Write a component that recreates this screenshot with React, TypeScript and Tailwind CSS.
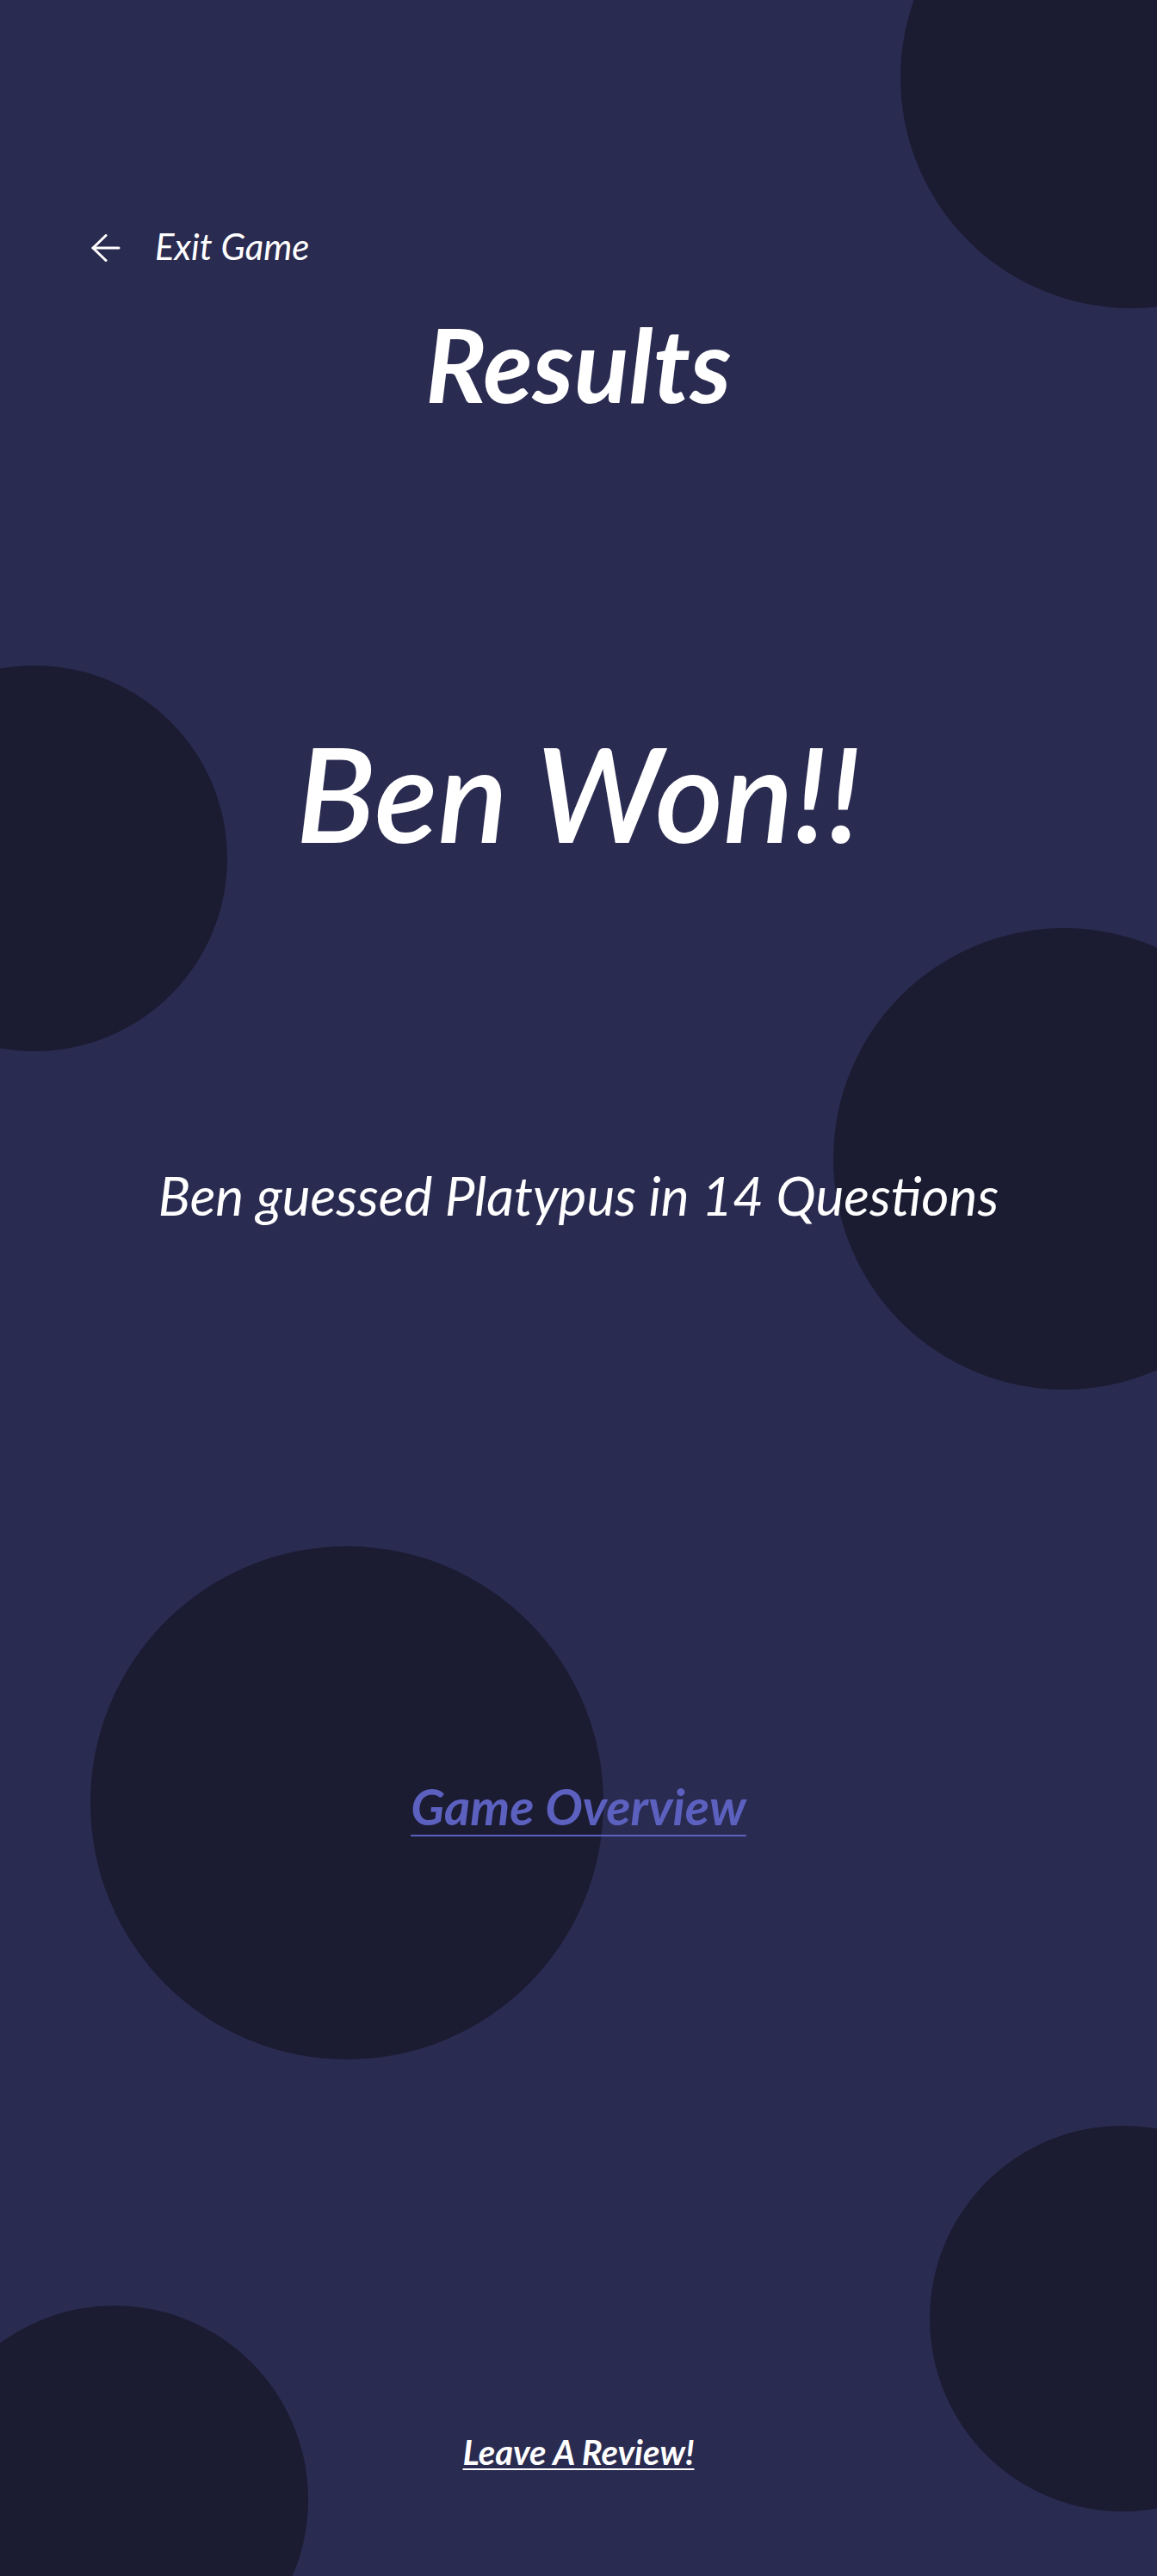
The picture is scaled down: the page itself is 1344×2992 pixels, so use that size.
import React from "react";

// decorative background blobs: [left, top, size]
const BLOBS = [
  "left-[1046px] top-[-178px] w-[536px] h-[536px]",
  "left-[-184px] top-[773px] w-[448px] h-[448px]",
  "left-[968px] top-[1078px] w-[536px] h-[536px]",
  "left-[105px] top-[1796px] w-[596px] h-[596px]",
  "left-[1080px] top-[2469px] w-[448px] h-[448px]",
  "left-[-92px] top-[2678px] w-[450px] h-[450px]",
];

function BackArrow() {
  return (
    <svg width="34" height="32" viewBox="0 0 34 32" fill="none" stroke="white" strokeWidth="3" strokeLinecap="round" strokeLinejoin="round">
      <path d="M32 16H2" />
      <path d="M17 1.5L2 16l15 14.5" />
    </svg>
  );
}

export default function App() {
  return (
    <div className="relative min-h-[2992px] w-full overflow-hidden bg-[#2a2b50] font-['Lato','Open_Sans',sans-serif] italic text-white">
      {BLOBS.map((b) => (
        <div key={b} className={`absolute rounded-full bg-[#1b1b32] ${b}`} />
      ))}

      <div className="relative z-10 flex flex-col">
        {/* Top bar */}
        <button className="mt-[265px] ml-[106px] flex h-[42px] items-center gap-[40px] self-start">
          <span className="mt-[4px]">
            <BackArrow />
          </span>
          <span className="text-[42px] leading-none">Exit Game</span>
        </button>

        <h1 className="mt-[57px] text-center text-[118px] font-bold leading-none">Results</h1>

        <p className="mt-[362px] text-center text-[152px] font-semibold leading-none">Ben Won!!</p>

        <p className="mt-[361px] text-center text-[62px] leading-none">Ben guessed Platypus in 14 Questions</p>

        <div className="mt-[650px] text-center">
          <a href="#" className="text-[58px] font-bold leading-none text-[#5c61c0] underline decoration-[2px] underline-offset-[11px]">
            Game Overview
          </a>
        </div>

        <div className="mt-[701px] text-center">
          <a href="#" className="text-[40px] font-bold leading-none underline decoration-[2px] underline-offset-[4px]">
            Leave A Review!
          </a>
        </div>
      </div>
    </div>
  );
}
